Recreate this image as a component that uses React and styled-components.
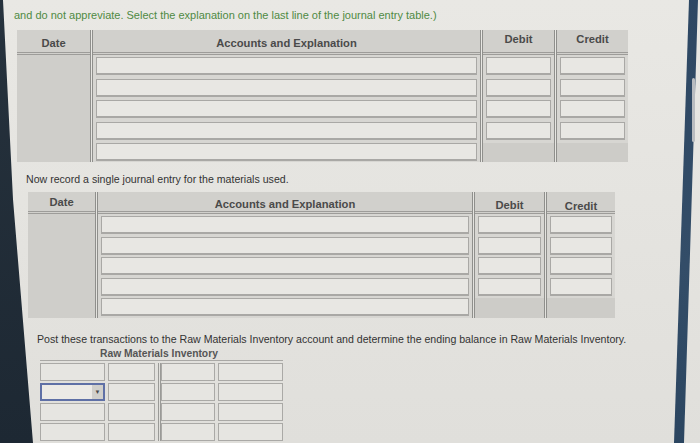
import React from 'react';
import styled, { createGlobalStyle } from 'styled-components';

const GlobalStyle = createGlobalStyle`
  html, body {
    margin: 0;
    padding: 0;
    background: #e3e2de;
  }
  body {
    font-family: "Liberation Sans", Arial, sans-serif;
    overflow: hidden;
  }
`;

// shift = vertical nudge of each header label (the photo is slightly tilted)
const journalOne = {
  indent: 17,
  top: 9,
  cols: [73, 390, 74, 74],
  headH: 25,
  rowH: 18,
  gap: 3.6,
  bodyH: 107,
  shift: [2, 2, -2, -2],
};
const journalTwo = {
  indent: 28,
  top: 7,
  cols: [67, 377, 72, 71],
  headH: 22,
  rowH: 18,
  gap: 2.6,
  bodyH: 104,
  shift: [0, 2, 3, 4],
};

function Journal({ indent, top, cols, headH, rowH, gap, bodyH, shift }) {
  const [dateW, accW, debW, credW] = cols;
  const rows = [0, 1, 2, 3, 4];
  return (
    <Table $indent={indent} $top={top}>
      <Column $w={dateW}>
        <Head $h={headH} $shift={shift[0]}>Date</Head>
        <Body $filled $h={bodyH} />
      </Column>
      <Column $w={accW}>
        <Head $h={headH} $shift={shift[1]}>Accounts and Explanation</Head>
        <Body $gap={gap} $h={bodyH}>
          {rows.map(r => (
            <Cell key={r} $h={rowH} />
          ))}
        </Body>
      </Column>
      <Column $w={debW}>
        <Head $h={headH} $shift={shift[2]}>Debit</Head>
        <Body $gap={gap} $h={bodyH}>
          {rows.map(r => (r < 4 ? <Cell key={r} $h={rowH} /> : <Blank key={r} />))}
        </Body>
      </Column>
      <Column $w={credW}>
        <Head $h={headH} $shift={shift[3]}>Credit</Head>
        <Body $gap={gap} $h={bodyH}>
          {rows.map(r => (r < 4 ? <Cell key={r} $h={rowH} /> : <Blank key={r} />))}
        </Body>
      </Column>
    </Table>
  );
}

function TAccount() {
  const rows = [0, 1, 2, 3];
  return (
    <TWrap>
      <TSide $cols="65px 47px">
        {rows.map(r => (
          <React.Fragment key={r}>
            {r === 1 ? (
              <Select>
                <Arrow>▼</Arrow>
              </Select>
            ) : (
              <TCell />
            )}
            <TCell />
          </React.Fragment>
        ))}
      </TSide>
      <TSide $cols="54px 65px" $right>
        {rows.map(r => (
          <React.Fragment key={r}>
            <TCell />
            <TCell />
          </React.Fragment>
        ))}
      </TSide>
    </TWrap>
  );
}

export default function App() {
  return (
    <>
      <GlobalStyle />
      <Page>
        <Instruction>
          and do not appreviate. Select the explanation on the last line of the journal entry table.)
        </Instruction>
        <Journal {...journalOne} />
        <Prompt $indent={26} $top={11} $size={10.6}>
          Now record a single journal entry for the materials used.
        </Prompt>
        <Journal {...journalTwo} />
        <Prompt $indent={37} $top={15} $size={10.6}>
          Post these transactions to the Raw Materials Inventory account and determine the ending
          balance in Raw Materials Inventory.
        </Prompt>
        <TTitle>Raw Materials Inventory</TTitle>
        <TAccount />
        <LeftBezel />
        <RightEdge>
          <Band />
          <Thumb />
        </RightEdge>
      </Page>
    </>
  );
}

const Page = styled.div`
  position: relative;
  width: 700px;
  height: 443px;
  overflow: hidden;
  box-sizing: border-box;
  padding-top: 9px;
  display: flex;
  flex-direction: column;
  align-items: flex-start;
  background: linear-gradient(180deg, #e9e8e4 0%, #e5e4e0 45%, #e0dfdb 100%);
`;

const Instruction = styled.div`
  margin-left: 14px;
  font-size: 11px;
  line-height: 12px;
  color: #4f8a43;
  white-space: nowrap;
`;

const Prompt = styled.div`
  margin-left: ${p => p.$indent}px;
  margin-top: ${p => p.$top}px;
  font-size: ${p => p.$size || 10}px;
  line-height: 12px;
  color: #333333;
  white-space: nowrap;
`;

const Table = styled.div`
  display: flex;
  margin-left: ${p => p.$indent}px;
  margin-top: ${p => p.$top}px;
`;

const Column = styled.div`
  width: ${p => p.$w}px;
  box-sizing: border-box;
  display: flex;
  flex-direction: column;
  & + & {
    border-left: 3px double #8f8f8c;
  }
`;

const Head = styled.div`
  height: ${p => p.$h}px;
  display: flex;
  align-items: center;
  justify-content: center;
  box-sizing: border-box;
  padding-top: ${p => Math.max(p.$shift, 0) * 2}px;
  padding-bottom: ${p => Math.max(-p.$shift, 0) * 2}px;
  background: #d1d0cc;
  border-bottom: 3px double #9d9c99;
  font-size: 11.2px;
  font-weight: bold;
  color: #4a4a4a;
`;

const Body = styled.div`
  display: flex;
  flex-direction: column;
  gap: ${p => p.$gap || 3}px;
  padding: 2px 3px 1px;
  height: ${p => p.$h}px;
  box-sizing: border-box;
  background: ${p => (p.$filled ? '#cfceca' : '#d7d6d2')};
`;

const Cell = styled.div`
  height: ${p => p.$h}px;
  flex-shrink: 0;
  box-sizing: border-box;
  border: 1px solid #a9a8a5;
  border-bottom-width: 2px;
  background: #e8e7e3;
`;

const Blank = styled.div`
  flex: 1;
  margin: 0 -3px -1px;
  background: #cdccc8;
`;

const TTitle = styled.div`
  margin-left: 100px;
  margin-top: 3px;
  font-size: 10.3px;
  line-height: 12px;
  font-weight: bold;
  color: #555555;
`;

const TWrap = styled.div`
  display: flex;
  margin-left: 40px;
  padding-top: 2px;
  border-top: 1px solid #a9a8a5;
`;

const TSide = styled.div`
  display: grid;
  grid-template-columns: ${p => p.$cols};
  grid-auto-rows: 18px;
  column-gap: 3px;
  row-gap: 2px;
  border-left: ${p => (p.$right ? '3px double #9a9a97' : 'none')};
  padding-right: ${p => (p.$right ? 0 : 3)}px;
`;

const TCell = styled.div`
  box-sizing: border-box;
  border: 1px solid #aaa9a6;
  background: #e6e5e1;
`;

const Select = styled.div`
  box-sizing: border-box;
  border: 2px solid #5f70a6;
  background: #eceae6;
  display: flex;
  justify-content: flex-end;
  align-items: stretch;
`;

const Arrow = styled.span`
  width: 11px;
  display: flex;
  align-items: center;
  justify-content: center;
  background: #d0cfcb;
  color: #4a4a4a;
  font-size: 6px;
`;

const LeftBezel = styled.div`
  position: absolute;
  left: 0;
  top: 0;
  width: 34px;
  height: 100%;
  background: linear-gradient(180deg, #26323d 0%, #1d2833 100%);
  clip-path: polygon(0 0, 3px 0, 13px 45%, 33px 100%, 0 100%);
`;

const RightEdge = styled.div`
  position: absolute;
  right: 0;
  top: 0;
  width: 26px;
  height: 100%;
`;

const Band = styled.div`
  position: absolute;
  inset: 0;
  background: linear-gradient(180deg, #2d4763 0%, #334d68 60%, #2b4560 100%);
  clip-path: polygon(15px 0, 24px 0, 10px 100%, 0 100%);
`;

const Thumb = styled.div`
  position: absolute;
  left: 18px;
  top: 78px;
  width: 3px;
  height: 64px;
  border-radius: 2px;
  background: #b9bcc0;
`;
